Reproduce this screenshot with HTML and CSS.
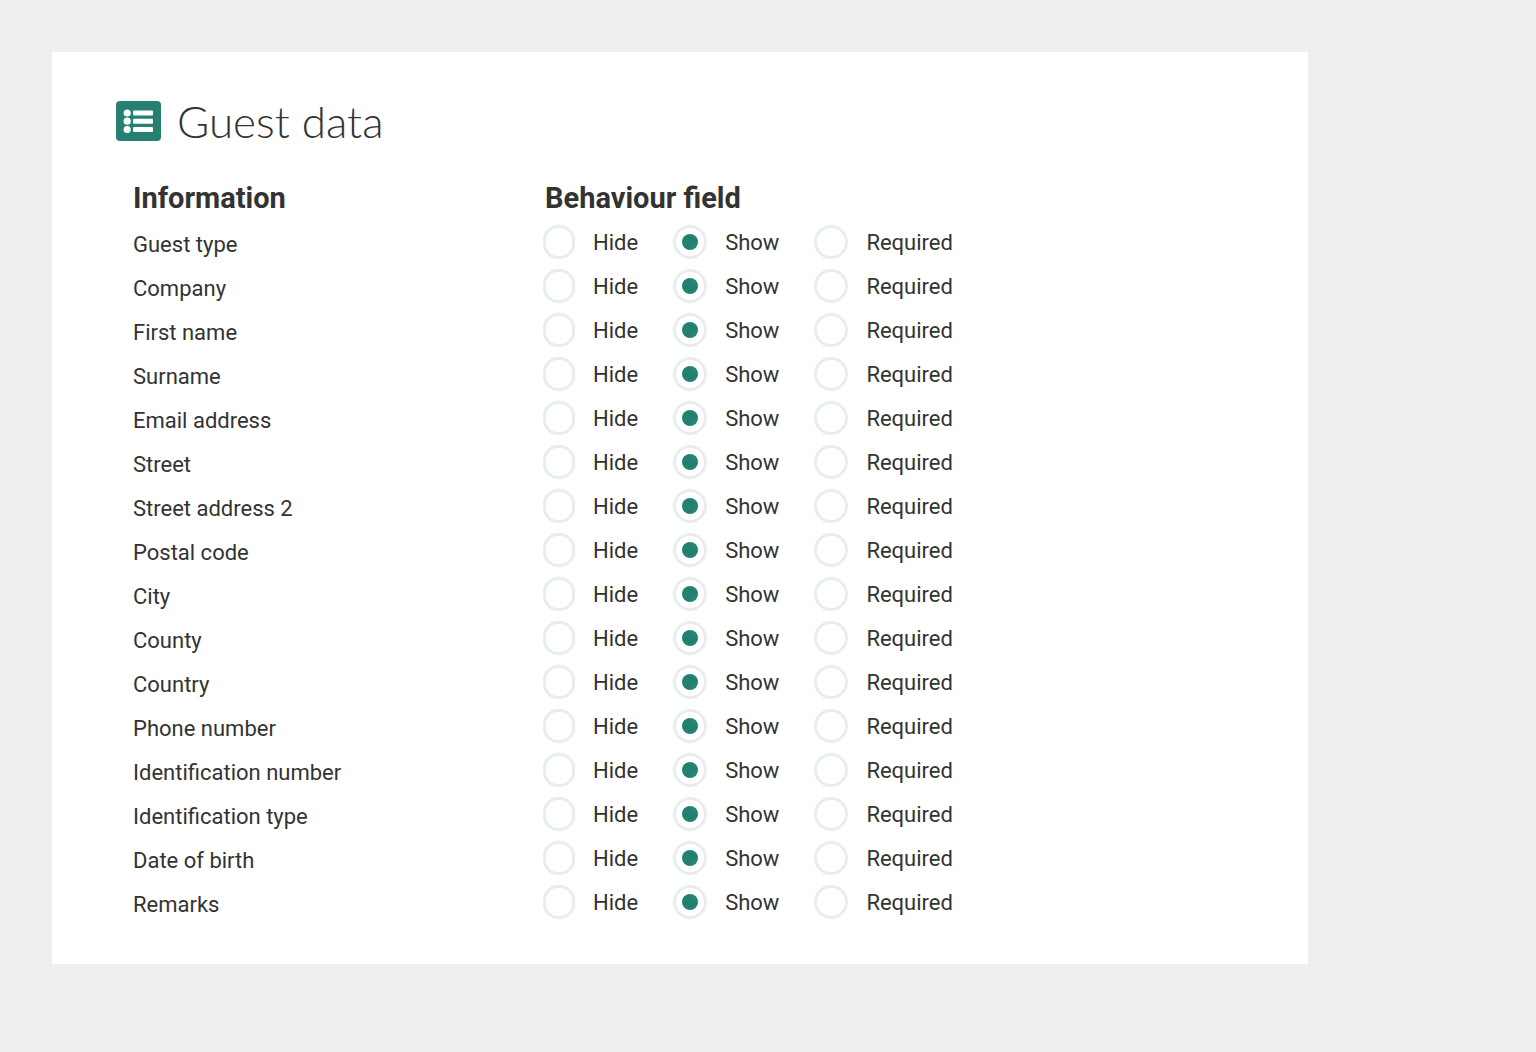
FILE: index.html
```html
<!doctype html>
<html lang="en">
<head>
<meta charset="utf-8" />
<title>Guest data</title>
<meta name="viewport" content="width=device-width, initial-scale=1" />
<link rel="stylesheet" href="styles.css">
</head>
<body>
  <main class="card">
    <h1 class="title">
      <svg class="title-icon" viewBox="0 0 45 40" aria-hidden="true">
        <rect width="45" height="40" rx="4" fill="#268072"/>
        <g fill="#fff">
          <circle cx="11.2" cy="12" r="3.6"/>
          <circle cx="11.2" cy="20.2" r="3.6"/>
          <circle cx="11.2" cy="28.5" r="3.6"/>
          <rect x="17" y="9.4" width="20" height="5" rx="1"/>
          <rect x="17" y="17.8" width="20" height="5" rx="1"/>
          <rect x="17" y="26" width="20" height="5" rx="1"/>
        </g>
      </svg>
      Guest data
    </h1>

    <table class="fields">
      <thead>
        <tr>
          <th class="col-info" scope="col">Information</th>
          <th class="col-behaviour" scope="col">Behaviour field</th>
        </tr>
      </thead>
      <tbody id="rows"></tbody>
    </table>
  </main>

<script>
const FIELDS = [
  'Guest type', 'Company', 'First name', 'Surname', 'Email address',
  'Street', 'Street address 2', 'Postal code', 'City', 'County', 'Country',
  'Phone number', 'Identification number', 'Identification type',
  'Date of birth', 'Remarks'
];
const OPTIONS = ['Hide', 'Show', 'Required'];

/* one row per field, "Show" is the default */
document.getElementById('rows').innerHTML = FIELDS.map((field, i) => `
  <tr>
    <th class="field-name" id="field-${i}" scope="row">${field}</th>
    <td>
      <div class="options" role="radiogroup" aria-labelledby="field-${i}">
        ${OPTIONS.map(option => `
        <label class="option option-${option.toLowerCase()}">
          <input type="radio" name="field-${i}" value="${option.toLowerCase()}"${option === 'Show' ? ' checked' : ''}>
          <span>${option}</span>
        </label>`).join('')}
      </div>
    </td>
  </tr>`).join('');
</script>
</body>
</html>
```

FILE: styles.css
```css
:root {
  --green: #268072;
  --ring: #e6efed;
  --text: #333;
  --bg: #eee;
}

* {
  margin: 0;
  padding: 0;
  box-sizing: border-box;
}

body {
  background: var(--bg);
  color: var(--text);
  font-family: Roboto, sans-serif;
  font-size: 22px;
  line-height: 28px;
}

.card {
  margin: 52px 228px 52px 52px;
  padding: 39px 64px 40px;
  background: #fff;
}

/* title */
.title {
  display: flex;
  align-items: center;
  gap: 16px;
  margin-bottom: 25px;
  font-family: Lato, sans-serif;
  font-size: 44px;
  font-weight: 300;
  line-height: 60px;
}

.title-icon {
  width: 45px;
  height: 40px;
}

/* table */
.fields {
  width: 100%;
  border-collapse: collapse;
  table-layout: fixed;
  text-align: left;
}

.fields th,
.fields td {
  height: 44px;
}

.fields thead th {
  font-size: 29px;
  font-weight: 700;
}

.fields .col-info {
  width: 427px;
  padding-left: 17px;
}

.fields .col-behaviour {
  padding-left: 2px;
}

.fields .field-name {
  padding: 6px 0 0 17px;
  font-weight: 400;
}

/* radio buttons */
.options {
  display: flex;
  gap: 35px;
}

.option {
  display: flex;
  align-items: center;
  gap: 18px;
}

.option span {
  padding-top: 2px;
}

.option input {
  appearance: none;
  display: grid;
  place-items: center;
  width: 34px;
  height: 34px;
  border: 3px solid var(--ring);
  border-radius: 17px;
  background: #fff;
}

.option-hide input {
  width: 32px;
  border-radius: 15px;
}

.option input:checked::before {
  content: "";
  width: 16px;
  height: 16px;
  border-radius: 50%;
  background: var(--green);
}
```
